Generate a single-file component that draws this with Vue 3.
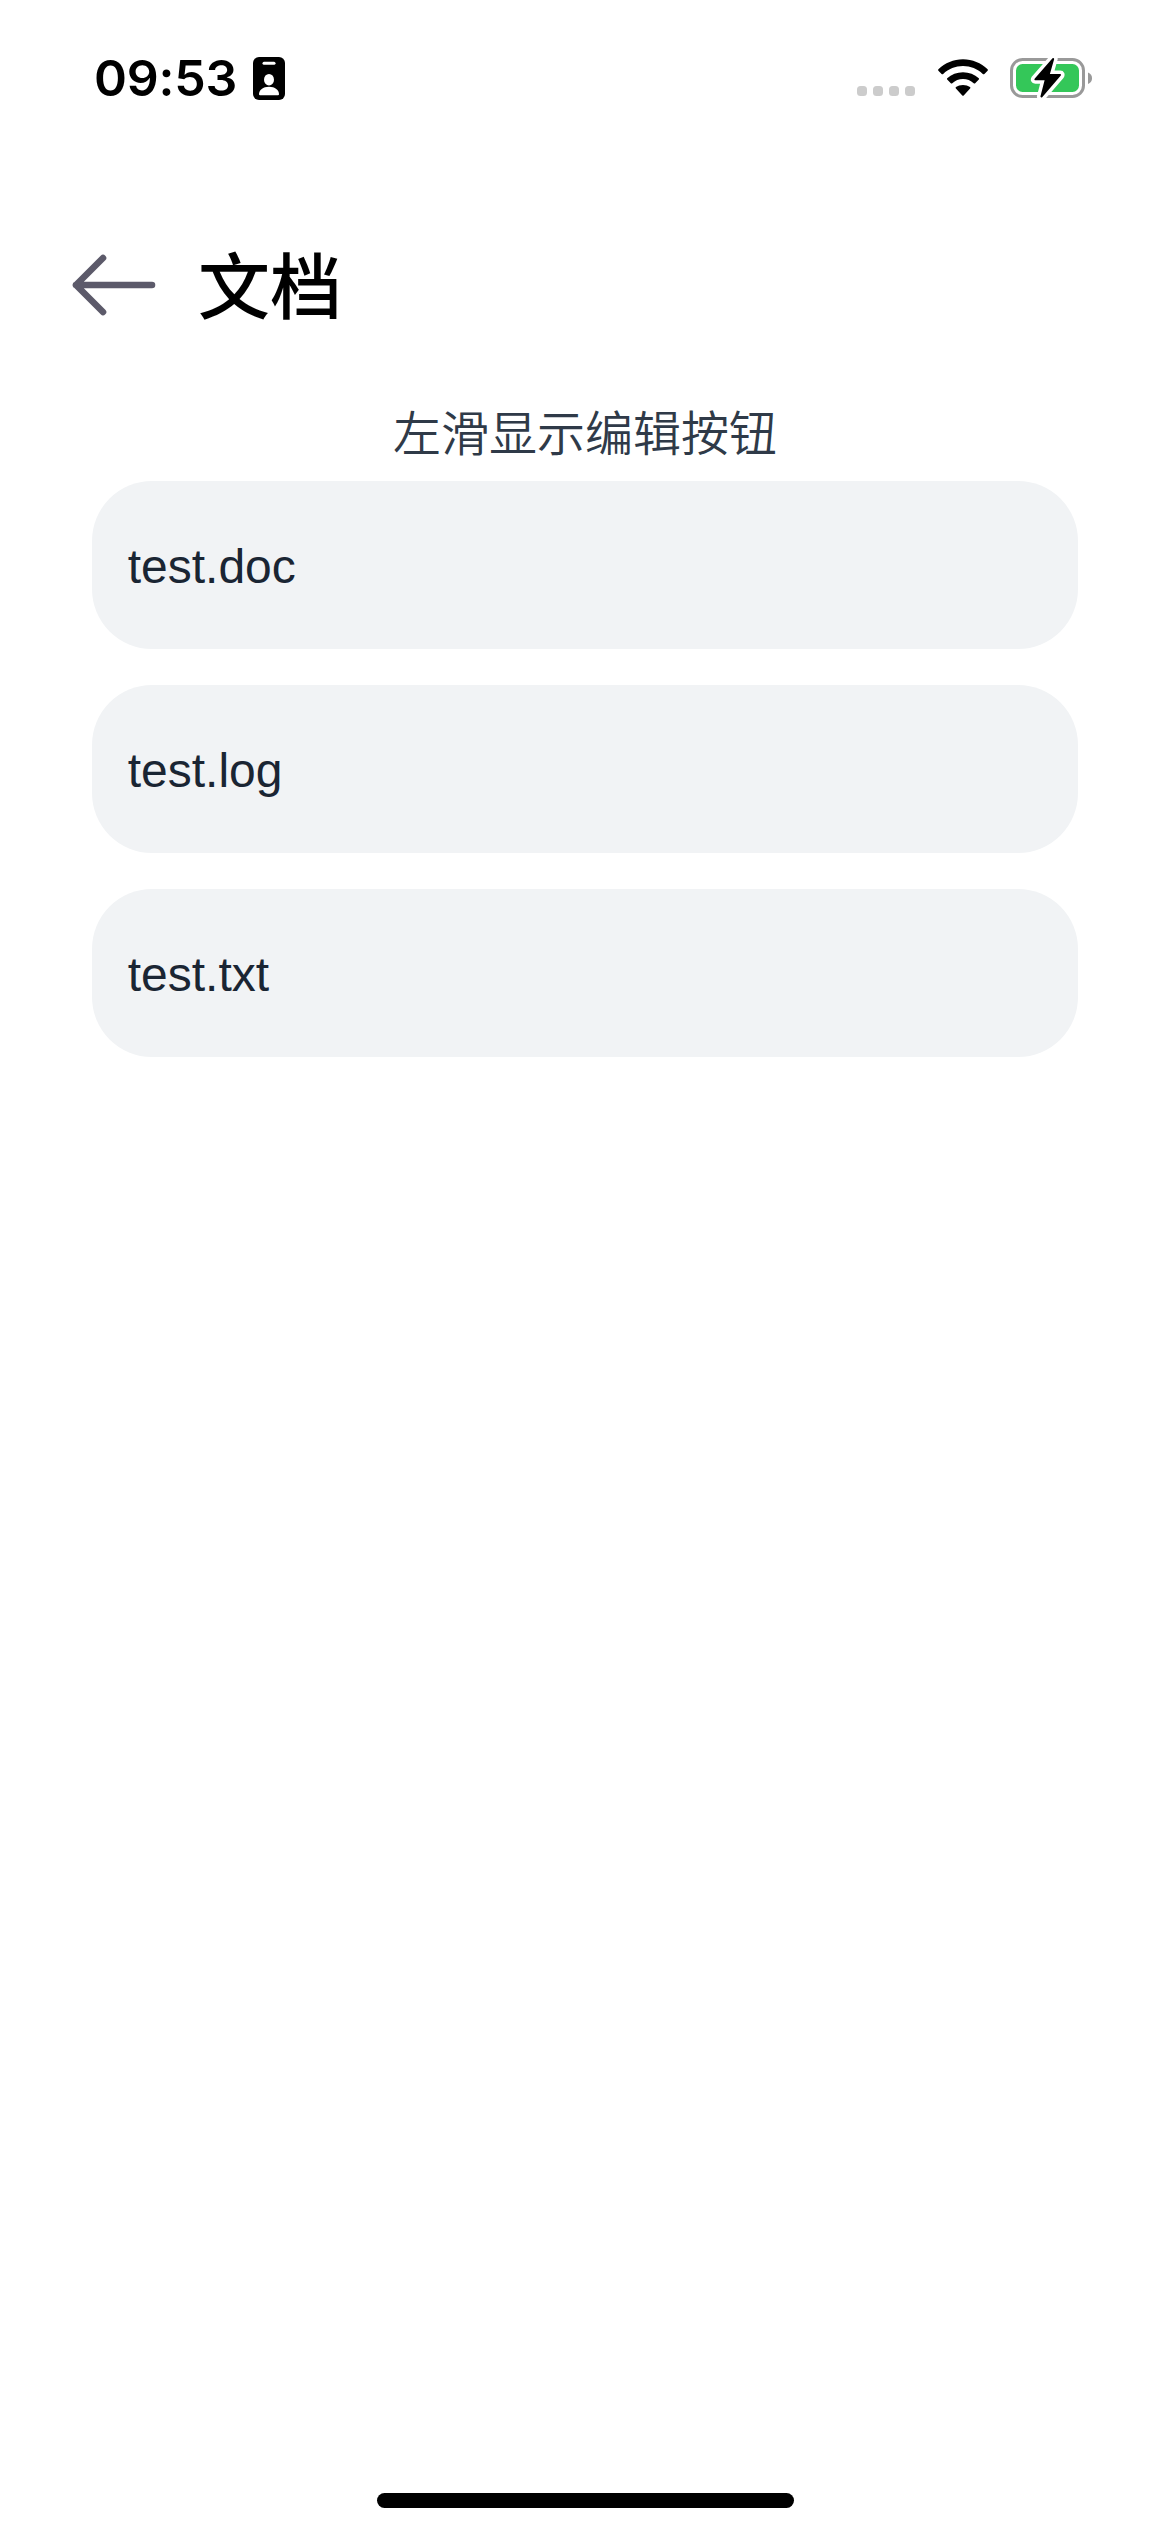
<script setup>
const files = ['test.doc', 'test.log', 'test.txt']
</script>

<template>
  <div class="screen">
    <div class="status">
      <span class="time">09:53</span>
      <svg class="badge" width="32" height="43" viewBox="0 0 32 43">
        <rect width="32" height="43" rx="6" fill="#000" />
        <rect x="9.5" y="4.8" width="13" height="3" rx="1.5" fill="#fff" />
        <ellipse cx="16" cy="22.7" rx="5" ry="5.8" fill="#fff" />
        <path d="M6 37.2C6 33 10 29.8 16 29.8S26 33 26 37.2Q26 38.3 24.9 38.3H7.1Q6 38.3 6 37.2Z" fill="#fff" />
      </svg>
      <div class="indicators">
        <div class="dots"><i v-for="n in 4" :key="n" /></div>
        <svg class="wifi" width="52" height="38" viewBox="0 0 52 38">
          <path d="M1.4 10.3C8 4 16.5 .3 26 .3S44 4 50.6 10.3Q51.3 11 50.6 11.7L47.4 14.9Q46.6 15.6 45.8 14.9C40.4 9.9 33.6 7.1 26 7.1S11.6 9.9 6.2 14.9Q5.4 15.6 4.6 14.9L1.4 11.7Q.7 11 1.4 10.3Z" />
          <path d="M10.2 19.2C14.4 15.4 20 13.2 26 13.2S37.6 15.4 41.8 19.2Q42.5 19.9 41.8 20.6L38.2 24.2Q37.5 24.9 36.7 24.2C33.8 21.7 30.1 20.1 26 20.1S18.2 21.7 15.3 24.2Q14.5 24.9 13.8 24.2L10.2 20.6Q9.5 19.9 10.2 19.2Z" />
          <path d="M19 28C20.9 26.7 23.3 26 26 26S31.1 26.7 33 28Q33.9 28.8 33.1 29.6L26.7 36.4Q26 37 25.3 36.4L18.9 29.6Q18.1 28.8 19 28Z" />
        </svg>
        <svg class="battery" width="84" height="44" viewBox="0 0 84 44">
          <rect x="1.5" y="3.5" width="72" height="37" rx="11" fill="none" stroke="#999" stroke-width="3" />
          <path d="M78 16.5Q82 18 82 22.2T78 28Z" fill="#999" />
          <rect x="6" y="8" width="63" height="28" rx="6.5" fill="#34c759" />
          <path d="M42.5 2.3L24.6 22.7Q23.8 24.3 25.3 24.3H34.6L30.4 40.6Q31.2 42.2 32.4 41L50.8 19.6Q51.6 18 50.1 18H39.9L44.2 2.9Q43.6 1.3 42.5 2.3Z" fill="#fff" stroke="#fff" stroke-width="7" stroke-linejoin="round" />
          <path d="M42.5 2.3L24.6 22.7Q23.8 24.3 25.3 24.3H34.6L30.4 40.6Q31.2 42.2 32.4 41L50.8 19.6Q51.6 18 50.1 18H39.9L44.2 2.9Q43.6 1.3 42.5 2.3Z" fill="#000" />
        </svg>
      </div>
    </div>

    <header class="header">
      <svg class="back" width="84" height="62" viewBox="0 0 84 62">
        <path d="M31 4L4 31L31 58M4 31H80" fill="none" stroke="#5c5a6a" stroke-width="6.6" stroke-linecap="round" stroke-linejoin="round" />
      </svg>
      <h1>文档</h1>
    </header>

    <p class="hint">左滑显示编辑按钮</p>
    <ul class="files">
      <li v-for="file in files" :key="file">{{ file }}</li>
    </ul>
    <div class="home" />
  </div>
</template>

<style>
body {
  margin: 0;
  background: #fff;
}
</style>

<style scoped>
.screen {
  display: flex;
  flex-direction: column;
  width: 1170px;
  height: 2532px;
  box-sizing: border-box;
  padding-bottom: 24px;
  background: #fff;
  font-family: "Liberation Sans", "Noto Sans CJK SC", sans-serif;
}
.status {
  display: flex;
  align-items: center;
  flex: none;
  height: 156px;
  padding: 0 76px 0 94px;
  box-sizing: border-box;
}
.time {
  width: 159px;
  font: 600 50px/60px Inter, sans-serif;
  letter-spacing: -0.2px;
  color: #000;
}
.badge {
  margin-top: 1px;
}
.indicators {
  display: flex;
  align-items: center;
  margin-left: auto;
}
.dots {
  display: flex;
  gap: 6px;
  margin: 26px 22px 0 0;
}
.dots i {
  width: 10px;
  height: 10px;
  border-radius: 3.5px;
  background: #ccc;
}
.wifi {
  margin-right: 21px;
}
.header {
  display: flex;
  align-items: center;
  flex: none;
  height: 240px;
  margin-top: 9px;
  padding-left: 72px;
}
h1 {
  margin: 0 0 7px 42px;
  font: 500 72px/104px "Noto Sans CJK SC", sans-serif;
  color: #000;
}
.hint {
  margin: -5px 0 0;
  height: 81px;
  text-align: center;
  font: 350 48px/60px "Noto Sans CJK SC", sans-serif;
  color: #2f3a48;
}
.files {
  display: flex;
  flex-direction: column;
  gap: 36px;
  margin: 0 91.7px;
  padding: 0;
  list-style: none;
}
.files li {
  height: 168px;
  padding-left: 36px;
  border-radius: 60px;
  background: #f1f3f5;
  font-size: 48px;
  line-height: 172px;
  color: #1a2533;
}
.home {
  width: 417px;
  height: 15px;
  margin: auto auto 0;
  border-radius: 8px;
  background: #000;
}
</style>
